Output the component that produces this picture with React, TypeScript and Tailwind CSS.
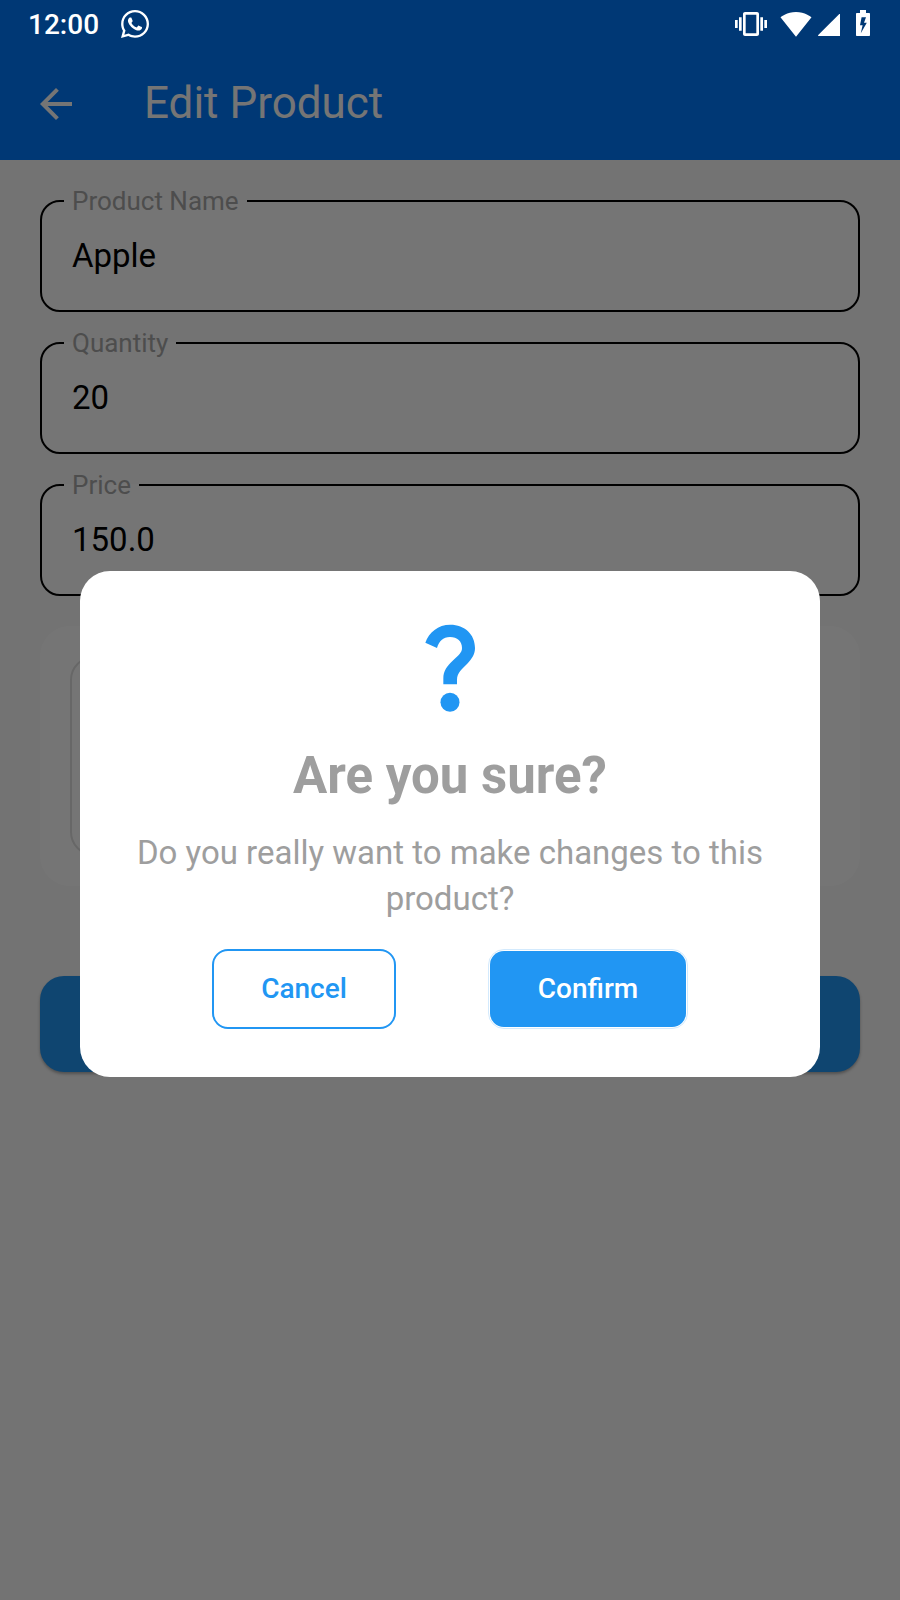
import { FaWhatsapp } from "react-icons/fa";
import { MdArrowBack, MdSignalWifi4Bar, MdVibration } from "react-icons/md";

function SignalIcon() {
  return (
    <svg viewBox="0 0 22 22" className="h-[22px] w-[22px]" fill="currentColor" aria-hidden="true">
      <path d="M0 21.3 21.3 0h.7v22H.3z" />
    </svg>
  );
}

function BatteryIcon() {
  return (
    <svg viewBox="0 0 14 26" className="h-[26px] w-[14px]" fill="currentColor" aria-hidden="true">
      <path
        fillRule="evenodd"
        d="M4 0h6v3h3.200c.5 0 .8.3.8.8v21.400c0 .5-.3.8-.8.8H.8c-.5 0-.8-.3-.8-.8V3.800c0-.5.3-.8.8-.8H4zM5.600 7.200 4 15.200h2.600L4.800 23.200 10.800 12.800H8l2-5.600z"
      />
    </svg>
  );
}

function QuestionIcon() {
  return (
    <svg viewBox="420 54 300 300" className="h-[100px] w-[100px]" fill="currentColor" aria-hidden="true">
      <path d="M496 128C507 97 534 74 571 74C614 74 645 103 645 144C645 163 637 175 621 192C607 207 591 218 591 239V253H550V236C550 211 561 199 578 182C596 165 606 158 606 144C606 124 592 111 570 111C549 111 537 124 531 144Z" />
      <circle cx="570" cy="307" r="28.500" />
    </svg>
  );
}

function StatusBar() {
  return (
    <div className="relative z-20 flex h-12 items-center justify-between pr-[30px] pl-7 text-white">
      <div className="flex items-center gap-5">
        <span className="pt-0.5 text-[28px] leading-8 font-medium">12:00</span>
        <FaWhatsapp className="h-8 w-8" aria-label="WhatsApp" />
      </div>
      <div className="flex items-center">
        <MdVibration className="h-8 w-8" aria-label="Vibrate" />
        <MdSignalWifi4Bar className="ml-[13px] h-8 w-8" aria-label="Wi-Fi" />
        <span className="ml-1.5 pt-0.5">
          <SignalIcon />
        </span>
        <span className="ml-4 pb-0.5">
          <BatteryIcon />
        </span>
      </div>
    </div>
  );
}

function Field({ id, label, value }: { id: string; label: string; value: string }) {
  return (
    <fieldset className="rounded-[20px] border-2 border-black bg-white px-[22px]">
      <legend className="px-2 text-[26px] leading-6 text-[#a8a8a8]">
        <label htmlFor={id}>{label}</label>
      </legend>
      <input
        id={id}
        defaultValue={value}
        className="mb-[13px] block h-[84px] w-full bg-transparent px-2 text-[33px] text-black outline-none"
      />
    </fieldset>
  );
}

function ConfirmDialog() {
  return (
    <div
      role="dialog"
      aria-modal="true"
      aria-labelledby="dialog-title"
      className="flex w-full flex-col items-center rounded-[30px] bg-white px-10 pt-[47px] pb-12 text-center text-[#9e9e9e]"
    >
      <span className="text-[#2196f3]">
        <QuestionIcon />
      </span>
      <h2 id="dialog-title" className="mt-7 text-[51px] leading-[60px] font-bold">
        Are you sure?
      </h2>
      <p className="mt-6 px-1 text-[33px] leading-[46px]">
        Do you really want to make changes to this product?
      </p>
      <div className="mt-[27px] flex gap-[92px]">
        <button
          type="button"
          className="h-20 w-[184px] rounded-2xl border-2 border-[#2196f3] text-[28px] font-medium text-[#2196f3]"
        >
          Cancel
        </button>
        <button
          type="button"
          className="h-20 w-[200px] rounded-2xl border border-[#d3eafd] p-px text-[28px] font-medium text-white"
        >
          <span className="flex h-full items-center justify-center rounded-[14px] bg-[#2196f3]">Confirm</span>
        </button>
      </div>
    </div>
  );
}

export default function App() {
  return (
    <div className="relative min-h-screen bg-[#fafafa] font-['Roboto',sans-serif]">
      <header className="bg-[#007aff]">
        <StatusBar />
        <div className="flex h-28 items-center gap-16 px-8 text-white">
          <button type="button" aria-label="Back">
            <MdArrowBack className="h-12 w-12" />
          </button>
          <h1 className="pb-0.5 text-[44px] leading-[52px]">Edit Product</h1>
        </div>
      </header>
      <main className="px-10 pt-[29px]">
        <form className="flex flex-col">
          <div className="flex flex-col gap-[19px]">
            <Field id="product-name" label="Product Name" value="Apple" />
            <Field id="quantity" label="Quantity" value="20" />
            <Field id="price" label="Price" value="150.0" />
          </div>
          <div className="mt-[30px] rounded-[30px] bg-white p-[30px]">
            <div className="h-[200px] w-[200px] rounded-[24px] border-2 border-[#e0e0e0]" />
          </div>
          <button
            type="submit"
            aria-label="Save"
            className="mt-[90px] h-24 rounded-3xl bg-[#2196f3] shadow-[0_2px_3px_rgba(0,0,0,0.3)]"
          />
        </form>
      </main>
      <div className="absolute inset-0 z-10 flex items-center justify-center bg-black/54 px-20 pt-12">
        <ConfirmDialog />
      </div>
    </div>
  );
}
